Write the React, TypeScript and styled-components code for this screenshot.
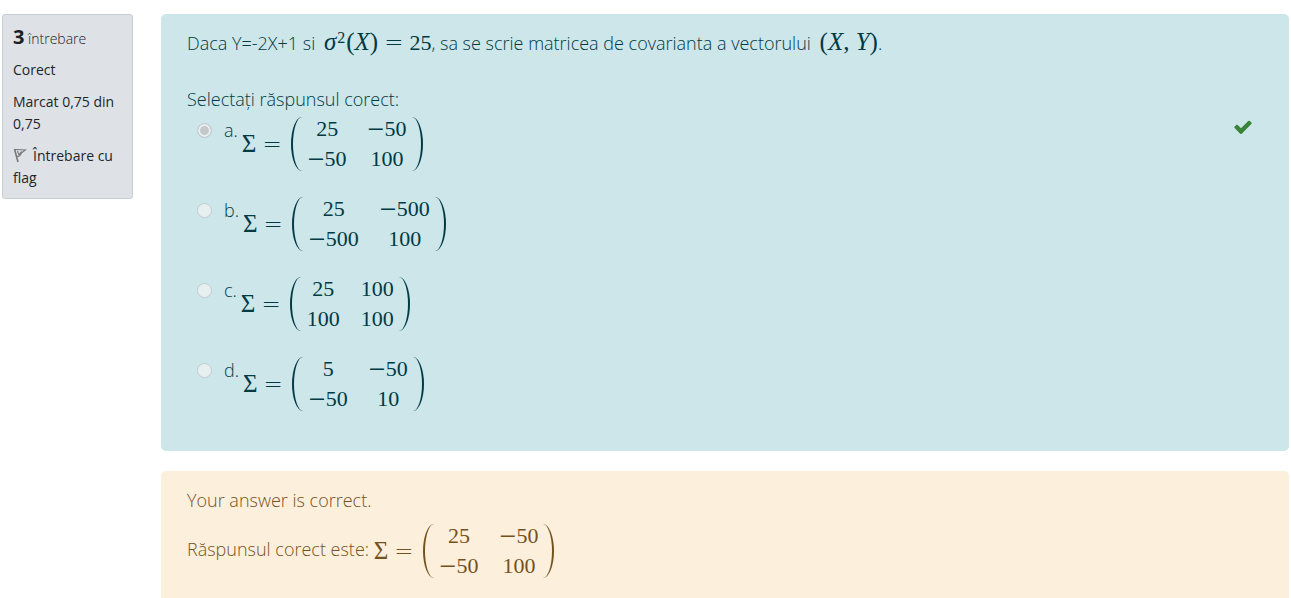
import React from "react";
import styled, { createGlobalStyle } from "styled-components";

const GlobalStyle = createGlobalStyle`
  * { box-sizing: border-box; }
  body {
    margin: 0;
    background: #fff;
    font-family: "Open Sans", "Noto Sans", sans-serif;
    font-size: 18px;
    font-weight: 300;
    line-height: 28px;
  }
`;

const Page = styled.main`
  display: flex;
  align-items: flex-start;
  gap: 28px;
  min-height: 100vh;
  padding: 14px 2px 0;
`;

const Info = styled.aside`
  flex: 0 0 131px;
  display: flex;
  flex-direction: column;
  gap: 10px;
  padding: 14px 10px 9px;
  border: 1px solid #c7cdd3;
  border-radius: 3px;
  background: #dee2e6;
  color: #212529;
  font-size: 14px;
  font-weight: 400;
  line-height: 22px;
`;

const Heading = styled.h2`
  margin: 0;
  font-size: 14px;
  font-weight: 300;
  line-height: 20px;
  color: #1d2125;
`;

const Number = styled.span`
  font-size: 20px;
  font-weight: 700;
  line-height: 0;
`;

const InfoText = styled.div``;

const FlagButton = styled.button`
  padding: 0;
  border: 0;
  background: none;
  color: inherit;
  font: inherit;
  text-align: left;
  cursor: pointer;

  svg {
    margin-right: 6px;
    vertical-align: -2px;
  }
`;

const Content = styled.div`
  flex: 1;
  align-self: stretch;
  display: flex;
  flex-direction: column;
  gap: 20px;
`;

const Formulation = styled.form`
  padding: 15px 26px 18px;
  border-radius: 5px;
  background: #cce6ea;
  color: #003a44;
`;

const Feedback = styled.section`
  flex: 1;
  padding: 15px 26px 18px;
  border-radius: 5px 5px 0 0;
  background: #fcefdc;
  color: #74521f;
`;

const Line = styled.p`
  margin: 0;

  & + & {
    margin-top: 7px;
  }
`;

const Answers = styled.fieldset`
  margin: 28px 0 0;
  padding: 0;
  border: 0;
`;

const Legend = styled.legend`
  padding: 0;
`;

const Answer = styled.div`
  display: flex;
  align-items: flex-start;
  height: 80px;
  padding: 1px 10px 0;
`;

const Radio = styled.input`
  appearance: none;
  flex: none;
  width: 15px;
  height: 15px;
  margin: 9px 12px 0 0;
  border: 1px solid #c3cbce;
  border-radius: 50%;
  background: #e8eff0;

  &:checked {
    background: #c4c8ca;
    box-shadow: inset 0 0 0 2px #e8eff0;
  }
`;

const AnswerLabel = styled.label`
  display: flex;
  align-items: flex-start;
  gap: 4px;
`;

const Letter = styled.span`
  padding-top: 2px;
`;

const Check = styled.svg`
  margin: 3px 0 0 auto;
`;

const Math = styled.span`
  font-family: "Liberation Serif", serif;
  font-size: 22px;
  font-weight: 400;
  white-space: nowrap;
`;

const InlineMath = styled(Math)`
  margin-left: 4px;
`;

const Symbol = styled.span`
  font-size: 25px;
  line-height: 0;
`;

const Sup = styled.sup`
  margin: 0 1px;
  font-size: 16px;
  line-height: 0;
  vertical-align: 7px;
`;

const Equals = styled.span`
  margin: 0 6px;
  font-family: "DejaVu Sans Light", "DejaVu Sans", sans-serif;
  font-size: 23px;
  font-weight: 200;
  line-height: 0;
`;

const Minus = styled.span`
  font-size: 30px;
  line-height: 0;
  vertical-align: -3px;
`;

const Equation = styled(Math)`
  display: inline-flex;
  align-items: center;
  vertical-align: middle;
`;

const Paren = styled.span<{ $side: "left" | "right" }>`
  width: 11px;
  height: 54px;
  ${({ $side }) =>
    $side === "left"
      ? "border-left: 2px solid; border-radius: 100% 0 0 100% / 50%; margin-left: 3px;"
      : "border-right: 2px solid; border-radius: 0 100% 100% 0 / 50%;"}
`;

const Grid = styled.span`
  display: grid;
  grid-template-columns: auto auto;
  column-gap: 21px;
  padding: 0 5px 0 6px;
  line-height: 30px;
  text-align: center;
`;

const Value = ({ n }: { n: number }) => (
  <span>
    {n < 0 && <Minus>−</Minus>}
    {n < 0 ? -n : n}
  </span>
);

const Covariance = ({ values }: { values: number[] }) => (
  <Equation>
    <Symbol>Σ</Symbol>
    <Equals>=</Equals>
    <Paren $side="left" />
    <Grid>
      {values.map((n, i) => (
        <Value key={i} n={n} />
      ))}
    </Grid>
    <Paren $side="right" />
  </Equation>
);

const answers = [
  { letter: "a", values: [25, -50, -50, 100], chosen: true },
  { letter: "b", values: [25, -500, -500, 100], chosen: false },
  { letter: "c", values: [25, 100, 100, 100], chosen: false },
  { letter: "d", values: [5, -50, -50, 10], chosen: false },
];

export default function App() {
  return (
    <>
      <GlobalStyle />
      <Page>
        <Info>
          <Heading>
            <Number>3</Number> întrebare
          </Heading>
          <InfoText>Corect</InfoText>
          <InfoText>Marcat 0,75 din 0,75</InfoText>
          <FlagButton type="button">
            <svg width="14" height="16" viewBox="0 0 14 16" fill="none" stroke="#777" aria-hidden="true">
              <path d="M1.5 2 L5 15" strokeWidth="1.6" />
              <path d="M2 2.5 L12.5 3 L9 5.5 L6.5 9 L4 9.5 M4.5 4 L6 8 L8.5 4.5" strokeWidth="1.1" />
            </svg>
            Întrebare cu flag
          </FlagButton>
        </Info>
        <Content>
          <Formulation>
            <Line>
              Daca Y=-2X+1 si{" "}
              <InlineMath>
                <Symbol>
                  <i>σ</i>
                </Symbol>
                <Sup>2</Sup>
                <Symbol>
                  (<i>X</i>)
                </Symbol>
                <Equals>=</Equals>25
              </InlineMath>
              , sa se scrie matricea de covarianta a vectorului{" "}
              <InlineMath>
                <Symbol>
                  (<i>X</i>, <i>Y</i>)
                </Symbol>
              </InlineMath>
              .
            </Line>
            <Answers>
              <Legend>Selectați răspunsul corect:</Legend>
              {answers.map(({ letter, values, chosen }) => (
                <Answer key={letter}>
                  <Radio type="radio" name="answer" id={`answer-${letter}`} defaultChecked={chosen} disabled />
                  <AnswerLabel htmlFor={`answer-${letter}`}>
                    <Letter>{letter}.</Letter>
                    <Covariance values={values} />
                  </AnswerLabel>
                  {chosen && (
                    <Check width="20" height="20" viewBox="0 0 1792 1792" fill="#398439" role="img" aria-label="Corect">
                      <path d="M1671 566q0 40-28 68l-724 724-136 136q-28 28-68 28t-68-28l-136-136-362-362q-28-28-28-68t28-68l136-136q28-28 68-28t68 28l294 295 656-657q28-28 68-28t68 28l136 136q28 28 28 68z" />
                    </Check>
                  )}
                </Answer>
              ))}
            </Answers>
          </Formulation>
          <Feedback>
            <Line>Your answer is correct.</Line>
            <Line>
              Răspunsul corect este: <Covariance values={answers[0].values} />
            </Line>
          </Feedback>
        </Content>
      </Page>
    </>
  );
}
